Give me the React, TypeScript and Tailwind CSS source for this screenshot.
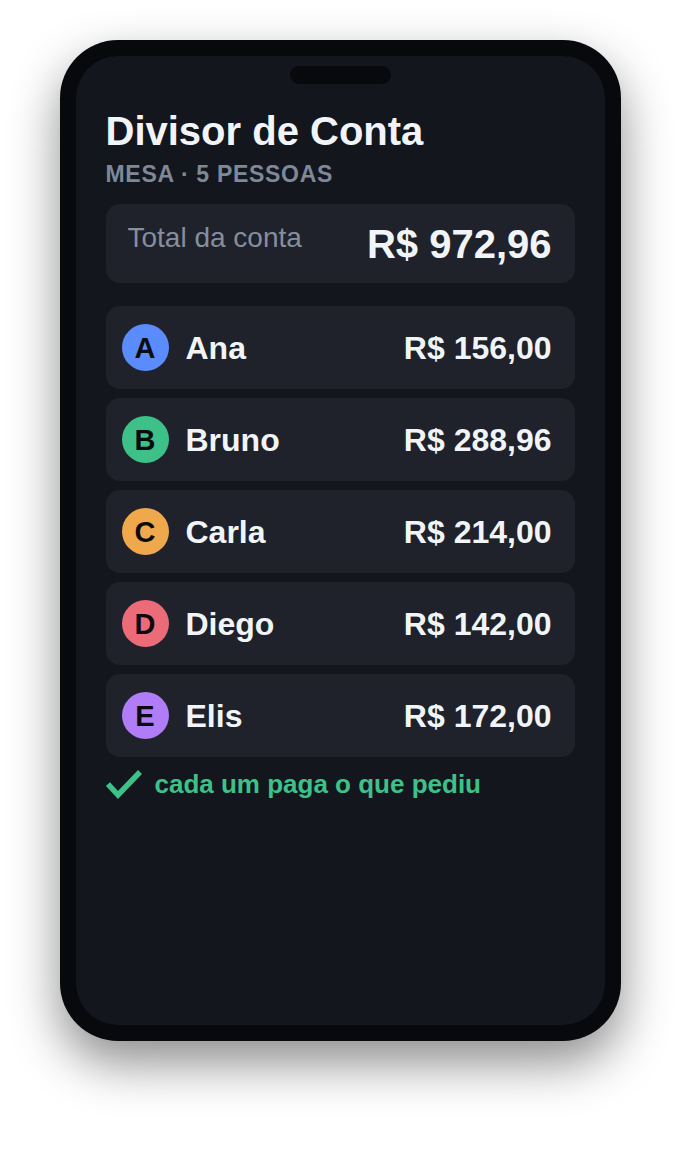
const people = [
  { initial: "A", name: "Ana", amount: "R$ 156,00", color: "bg-[#5b8cff]" },
  { initial: "B", name: "Bruno", amount: "R$ 288,96", color: "bg-[#3dc189]" },
  { initial: "C", name: "Carla", amount: "R$ 214,00", color: "bg-[#f0a84d]" },
  { initial: "D", name: "Diego", amount: "R$ 142,00", color: "bg-[#ec6b78]" },
  { initial: "E", name: "Elis", amount: "R$ 172,00", color: "bg-[#b07cf7]" },
];

export default function App() {
  return (
    <div className="w-[680px] h-[1150px] bg-white flex justify-center pt-10 font-['Liberation_Sans',Arial,sans-serif]">
      {/* Phone frame */}
      <div className="w-[561px] h-[1001px] rounded-[58px] bg-[#08090c] p-4 shadow-[0_22px_50px_rgba(0,0,0,0.45)]">
        <div className="h-full rounded-[42px] bg-[#13161d] flex flex-col px-[30px]">
          <div className="flex justify-center pt-[10px]">
            <div className="w-[101px] h-[18px] rounded-full bg-[#08090c]" />
          </div>

          {/* Header */}
          <h1 className="mt-[23px] text-[40px] leading-[48px] font-bold text-[#f1f4f9]">Divisor de Conta</h1>
          <p className="mt-[5px] text-[23px] leading-[28px] font-bold text-[#7f8898] tracking-[0.03em]">MESA · 5 PESSOAS</p>

          {/* Total */}
          <div className="mt-[16px] h-[79px] rounded-[14px] bg-[#1f222a] flex justify-between items-start pl-[22px] pr-[23px] pt-[17px]">
            <span className="text-[28px] leading-[34px] text-[#858e9e]">Total da conta</span>
            <span className="text-[40px] leading-[46px] font-bold text-[#f1f4f9]">R$ 972,96</span>
          </div>

          {/* People */}
          <div className="mt-[23px] flex flex-col gap-[9px]">
            {people.map((p) => (
              <div key={p.name} className="h-[83px] rounded-[14px] bg-[#1f222a] flex items-center pl-4 pr-[23px]">
                <div className={`w-[47px] h-[47px] rounded-full ${p.color} flex items-center justify-center pt-[3px] text-[29px] font-bold text-[#0b0c10]`}>
                  {p.initial}
                </div>
                <span className="ml-[17px] text-[32px] font-bold text-[#f1f4f9]">{p.name}</span>
                <span className="ml-auto text-[32px] font-bold text-[#f1f4f9]">{p.amount}</span>
              </div>
            ))}
          </div>

          {/* Footer note */}
          <div className="mt-[8px] flex items-center gap-3">
            <svg width="37" height="32" viewBox="0 0 37 32" fill="none">
              <polyline points="2,15 12,26 34,3" stroke="#3dc189" strokeWidth="5.5" strokeLinejoin="miter" />
            </svg>
            <span className="text-[26px] font-bold text-[#3dc189]">cada um paga o que pediu</span>
          </div>
        </div>
      </div>
    </div>
  );
}
